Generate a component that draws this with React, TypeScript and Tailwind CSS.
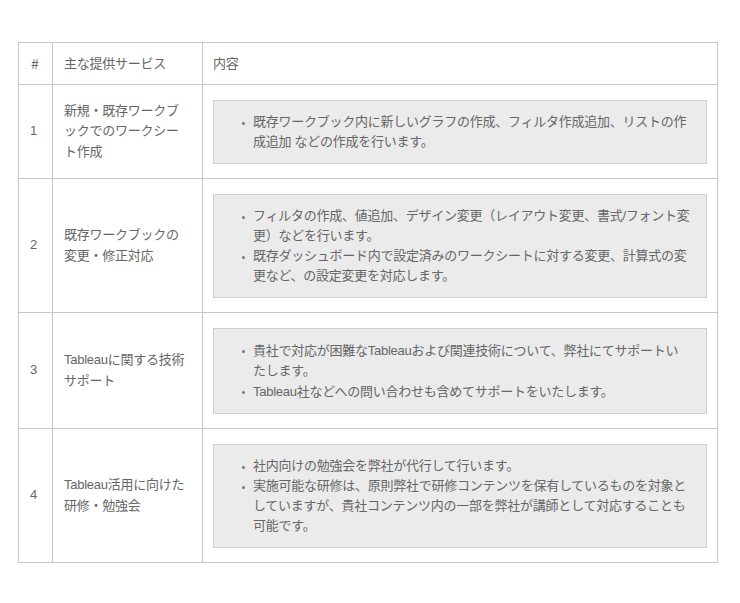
import React from "react";

type Row = {
  no: string;
  service: string[];
  items: string[][];
};

const rows: Row[] = [
  {
    no: "1",
    service: ["新規・既存ワークブ", "ックでのワークシー", "ト作成"],
    items: [
      [
        "既存ワークブック内に新しいグラフの作成、フィルタ作成追加、リストの作",
        "成追加 などの作成を行います。",
      ],
    ],
  },
  {
    no: "2",
    service: ["既存ワークブックの", "変更・修正対応"],
    items: [
      [
        "フィルタの作成、値追加、デザイン変更（レイアウト変更、書式/フォント変",
        "更）などを行います。",
      ],
      [
        "既存ダッシュボード内で設定済みのワークシートに対する変更、計算式の変",
        "更など、の設定変更を対応します。",
      ],
    ],
  },
  {
    no: "3",
    service: ["Tableauに関する技術", "サポート"],
    items: [
      [
        "貴社で対応が困難なTableauおよび関連技術について、弊社にてサポートい",
        "たします。",
      ],
      ["Tableau社などへの問い合わせも含めてサポートをいたします。"],
    ],
  },
  {
    no: "4",
    service: ["Tableau活用に向けた", "研修・勉強会"],
    items: [
      ["社内向けの勉強会を弊社が代行して行います。"],
      [
        "実施可能な研修は、原則弊社で研修コンテンツを保有しているものを対象と",
        "していますが、貴社コンテンツ内の一部を弊社が講師として対応することも",
        "可能です。",
      ],
    ],
  },
];

export default function App() {
  return (
    <div
      className="w-[740px] h-[603px] bg-white pt-[42px] pl-[18px] text-[13px] tracking-[-0.25px] text-[#666]"
      style={{ fontFamily: '"Liberation Sans", "Noto Sans CJK JP", sans-serif' }}
    >
      <table className="border-collapse w-[700px] table-fixed">
        <colgroup>
          <col className="w-[34px]" />
          <col className="w-[150px]" />
          <col />
        </colgroup>
        <thead>
          <tr>
            <th className="border border-[#c8c8c8] h-[42px] px-[11px] text-left font-normal leading-[20px]">
              <span className="ml-[1px] text-[14px] font-['Noto_Sans_CJK_JP',sans-serif]">#</span>
            </th>
            <th className="border border-[#c8c8c8] h-[42px] px-[11px] text-left font-normal leading-[20px]">
              主な提供サービス
            </th>
            <th className="border border-[#c8c8c8] h-[42px] px-[10px] text-left font-normal leading-[20px]">
              内容
            </th>
          </tr>
        </thead>
        <tbody>
          {rows.map((r) => (
            <tr key={r.no}>
              <td className="border border-[#c8c8c8] px-[11px] align-middle leading-[20.5px]">
                {r.no}
              </td>
              <td className="border border-[#c8c8c8] px-[11px] align-middle leading-[20.5px]">
                {r.service.map((s, i) => (
                  <span key={i} className="block whitespace-nowrap">
                    {s}
                  </span>
                ))}
              </td>
              <td className="border border-[#c8c8c8] pl-[10px] pr-[10px] pt-[15px] pb-[14px]">
                <div className="border border-[#d0d0d0] bg-[#ebebeb] py-[11px] pl-[28px] pr-[8px]">
                  <ul className="flex flex-col">
                    {r.items.map((lines, i) => (
                      <li key={i} className="flex">
                        <span className="mt-[10px] mr-[8px] w-[3px] h-[3px] shrink-0 rounded-full bg-[#777]" />
                        <span className="flex flex-col">
                          {lines.map((l, j) => (
                            <span
                              key={j}
                              className={
                                l.includes("Tableau")
                                  ? "block whitespace-nowrap leading-[21px]"
                                  : "block whitespace-nowrap leading-[20px]"
                              }
                            >
                              {l}
                            </span>
                          ))}
                        </span>
                      </li>
                    ))}
                  </ul>
                </div>
              </td>
            </tr>
          ))}
        </tbody>
      </table>
    </div>
  );
}
